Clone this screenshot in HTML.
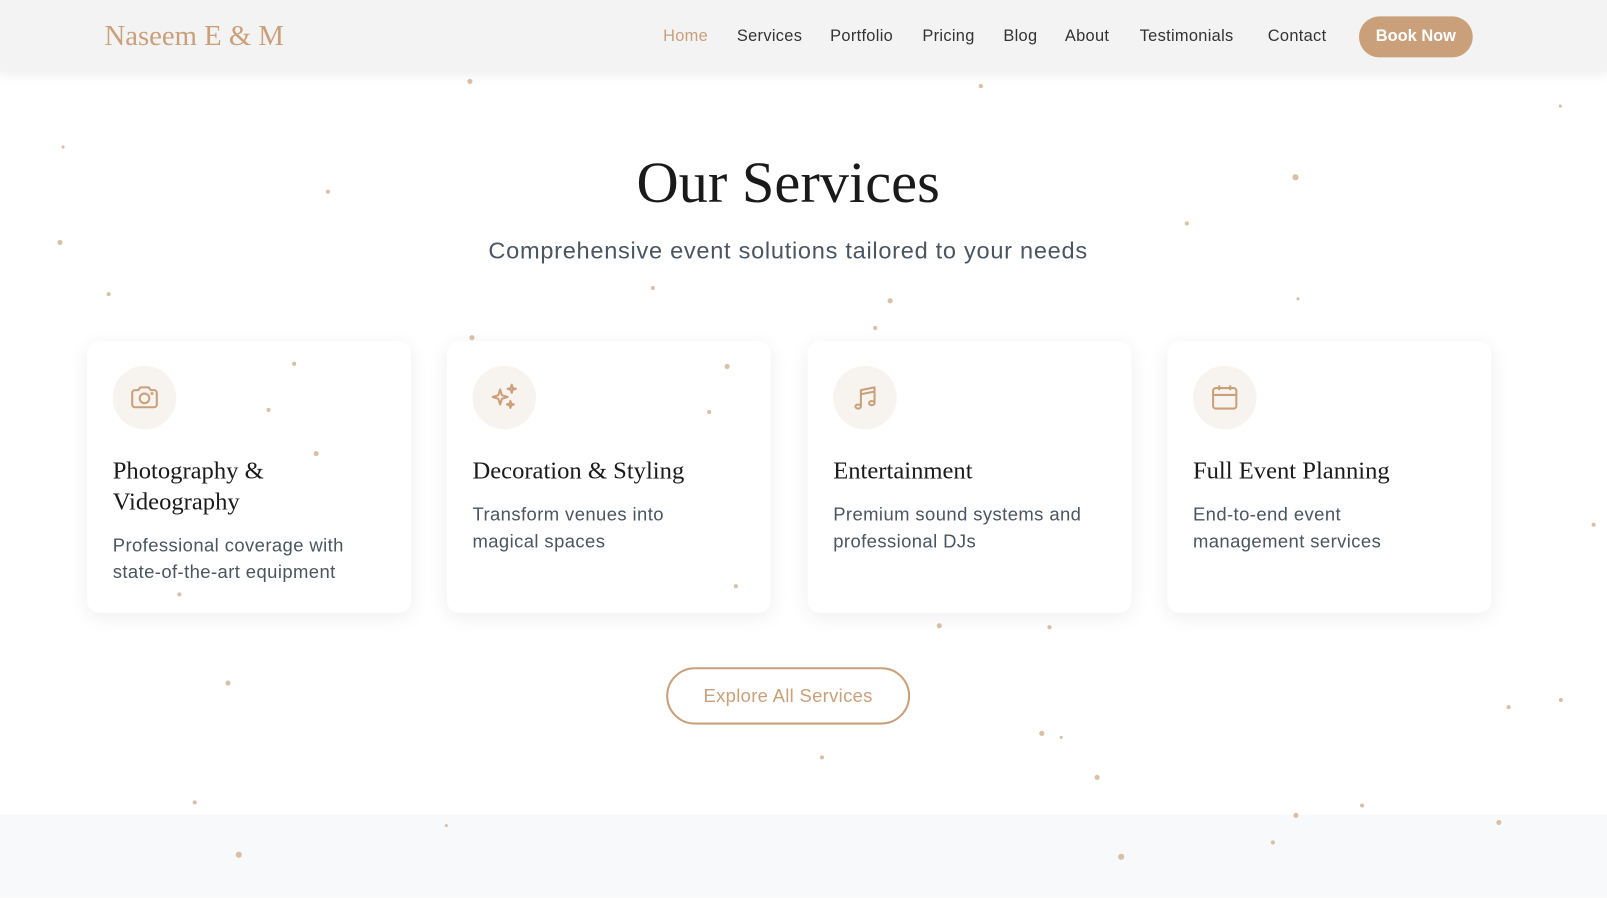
<!DOCTYPE html>
<html><head><meta charset="utf-8"><style>
*{margin:0;padding:0;box-sizing:border-box}
body{width:1607px;height:876px;overflow:hidden;background:#fff;font-family:"Liberation Sans",sans-serif;position:relative}
#w{position:absolute;left:0;top:0;width:1568px;height:855px;transform:scale(1.02487);transform-origin:0 0}
.hdr{position:absolute;left:0;top:0;width:1568px;height:70px;background:#f3f3f3;box-shadow:0 2px 12px rgba(0,0,0,.08);z-index:3}
.logo{position:absolute;left:102px;top:20px;font-family:"Liberation Serif",serif;font-size:28px;color:#c9a07a}
.nav{position:absolute;top:27px;font-size:16px;color:#333;letter-spacing:.3px}
.book{position:absolute;left:1326px;top:16px;width:111px;height:40px;border-radius:20px;background:#c9a07a;color:#fff;font-weight:bold;font-size:16px;text-align:center;line-height:40px}
h1{position:absolute;left:0;width:1538px;top:146px;text-align:center;font-family:"Liberation Serif",serif;font-weight:normal;font-size:57px;color:#1a1a1a}
.sub{position:absolute;left:0;width:1538px;top:231px;text-align:center;font-size:23px;letter-spacing:.7px;color:#4a5560}
.card{position:absolute;top:333px;width:316px;height:265px;background:#fff;border-radius:12px;box-shadow:0 4px 20px rgba(0,0,0,.07);z-index:1}
.ic{position:absolute;left:25px;top:24px;width:62px;height:62px;border-radius:50%;background:#f7f3ee}
.ic svg{position:absolute;left:15px;top:15px}
.t{position:absolute;left:25px;top:112px;font-family:"Liberation Serif",serif;font-size:24px;line-height:30px;color:#1a1a1a;width:270px}
.d{position:absolute;left:25px;font-size:18px;line-height:26px;letter-spacing:.4px;color:#4a5560;width:262px}
.btn{position:absolute;left:650px;top:651px;width:238px;height:56px;border:2px solid #c9a07a;border-radius:28px;color:#c9a07a;font-size:18px;letter-spacing:.3px;text-align:center;line-height:52px}
.band{position:absolute;left:0;top:795px;width:1568px;height:81px;background:#f8f9fa}
.dot{position:absolute;border-radius:50%;background:#d8bfa6;z-index:2}
</style></head><body><div id="w">
<div class="hdr">
<div class="logo">Naseem E &amp; M</div>
<span class="nav" style="left:647px;color:#c9a07a">Home</span>
<span class="nav" style="left:719px">Services</span>
<span class="nav" style="left:810px">Portfolio</span>
<span class="nav" style="left:900px">Pricing</span>
<span class="nav" style="left:979px">Blog</span>
<span class="nav" style="left:1039px">About</span>
<span class="nav" style="left:1112px">Testimonials</span>
<span class="nav" style="left:1237px">Contact</span>
<div class="book">Book Now</div>
</div>
<h1>Our Services</h1>
<div class="sub">Comprehensive event solutions tailored to your needs</div>

<div class="card" style="left:85px"><div class="ic"><svg width="32" height="32" viewBox="0 0 24 24" fill="none" stroke="#c9a07a" stroke-width="1.5" stroke-linejoin="round"><path d="M3 8.5a2 2 0 0 1 2-2h2.5l1.5-2h6l1.5 2H19a2 2 0 0 1 2 2V17a2 2 0 0 1-2 2H5a2 2 0 0 1-2-2z"/><circle cx="12" cy="12.5" r="3.5"/><circle cx="17.5" cy="9" r=".4"/></svg></div>
<div class="t">Photography &amp;<br>Videography</div><div class="d" style="top:186px">Professional coverage with state-of-the-art equipment</div></div>
<div class="card" style="left:436px"><div class="ic"><svg width="32" height="32" viewBox="0 0 24 24" fill="none" stroke="#c9a07a" stroke-width="1.5" stroke-linejoin="round"><path d="M9 6l1.3 4.2L14.5 11.5 10.3 12.8 9 17 7.7 12.8 3.5 11.5 7.7 10.2z"/><path d="M17.5 2.5l.7 2.3 2.3.7-2.3.7-.7 2.3-.7-2.3-2.3-.7 2.3-.7z"/><path d="M16.5 14.5l.6 1.9 1.9.6-1.9.6-.6 1.9-.6-1.9-1.9-.6 1.9-.6z"/></svg></div>
<div class="t">Decoration &amp; Styling</div><div class="d" style="top:156px">Transform venues into<br>magical spaces</div></div>
<div class="card" style="left:788px"><div class="ic"><svg width="32" height="32" viewBox="0 0 24 24" fill="none" stroke="#c9a07a" stroke-width="1.5" stroke-linejoin="round"><path d="M9 18V6.5l10-2V16"/><path d="M9 9.5l10-2"/><ellipse cx="7" cy="18.5" rx="2" ry="1.5"/><ellipse cx="17" cy="16" rx="2" ry="1.5"/></svg></div>
<div class="t">Entertainment</div><div class="d" style="top:156px">Premium sound systems and professional DJs</div></div>
<div class="card" style="left:1139px"><div class="ic"><svg width="32" height="32" viewBox="0 0 24 24" fill="none" stroke="#c9a07a" stroke-width="1.5" stroke-linejoin="round"><rect x="3.5" y="5" width="17" height="15" rx="2"/><path d="M3.5 10h17M8 3v3.5M16 3v3.5"/></svg></div>
<div class="t">Full Event Planning</div><div class="d" style="top:156px">End-to-end event<br>management services</div></div>

<div class="btn">Explore All Services</div>
<div class="band"></div>

<div class="dot" style="left:456px;top:77px;width:5px;height:5px"></div>
<div class="dot" style="left:955px;top:82px;width:4px;height:4px"></div>
<div class="dot" style="left:1521px;top:102px;width:3px;height:3px"></div>
<div class="dot" style="left:60px;top:142px;width:3px;height:3px"></div>
<div class="dot" style="left:318px;top:185px;width:4px;height:4px"></div>
<div class="dot" style="left:1261px;top:170px;width:6px;height:6px"></div>
<div class="dot" style="left:1156px;top:216px;width:4px;height:4px"></div>
<div class="dot" style="left:56px;top:234px;width:5px;height:5px"></div>
<div class="dot" style="left:104px;top:285px;width:4px;height:4px"></div>
<div class="dot" style="left:635px;top:279px;width:4px;height:4px"></div>
<div class="dot" style="left:866px;top:291px;width:5px;height:5px"></div>
<div class="dot" style="left:1265px;top:290px;width:3px;height:3px"></div>
<div class="dot" style="left:458px;top:327px;width:5px;height:5px"></div>
<div class="dot" style="left:852px;top:318px;width:4px;height:4px"></div>
<div class="dot" style="left:285px;top:353px;width:4px;height:4px"></div>
<div class="dot" style="left:707px;top:355px;width:5px;height:5px"></div>
<div class="dot" style="left:260px;top:398px;width:4px;height:4px"></div>
<div class="dot" style="left:690px;top:400px;width:4px;height:4px"></div>
<div class="dot" style="left:306px;top:440px;width:5px;height:5px"></div>
<div class="dot" style="left:1553px;top:510px;width:4px;height:4px"></div>
<div class="dot" style="left:716px;top:570px;width:4px;height:4px"></div>
<div class="dot" style="left:173px;top:578px;width:4px;height:4px"></div>
<div class="dot" style="left:914px;top:608px;width:5px;height:5px"></div>
<div class="dot" style="left:1022px;top:610px;width:4px;height:4px"></div>
<div class="dot" style="left:220px;top:664px;width:5px;height:5px"></div>
<div class="dot" style="left:1470px;top:688px;width:4px;height:4px"></div>
<div class="dot" style="left:1521px;top:681px;width:4px;height:4px"></div>
<div class="dot" style="left:1014px;top:713px;width:5px;height:5px"></div>
<div class="dot" style="left:1034px;top:718px;width:3px;height:3px"></div>
<div class="dot" style="left:800px;top:737px;width:4px;height:4px"></div>
<div class="dot" style="left:1068px;top:756px;width:5px;height:5px"></div>
<div class="dot" style="left:188px;top:781px;width:4px;height:4px"></div>
<div class="dot" style="left:1327px;top:784px;width:4px;height:4px"></div>
<div class="dot" style="left:1262px;top:793px;width:5px;height:5px"></div>
<div class="dot" style="left:1460px;top:800px;width:5px;height:5px"></div>
<div class="dot" style="left:434px;top:804px;width:3px;height:3px"></div>
<div class="dot" style="left:230px;top:831px;width:6px;height:6px"></div>
<div class="dot" style="left:1091px;top:833px;width:6px;height:6px"></div>
<div class="dot" style="left:1240px;top:820px;width:4px;height:4px"></div>
</div></body></html>
